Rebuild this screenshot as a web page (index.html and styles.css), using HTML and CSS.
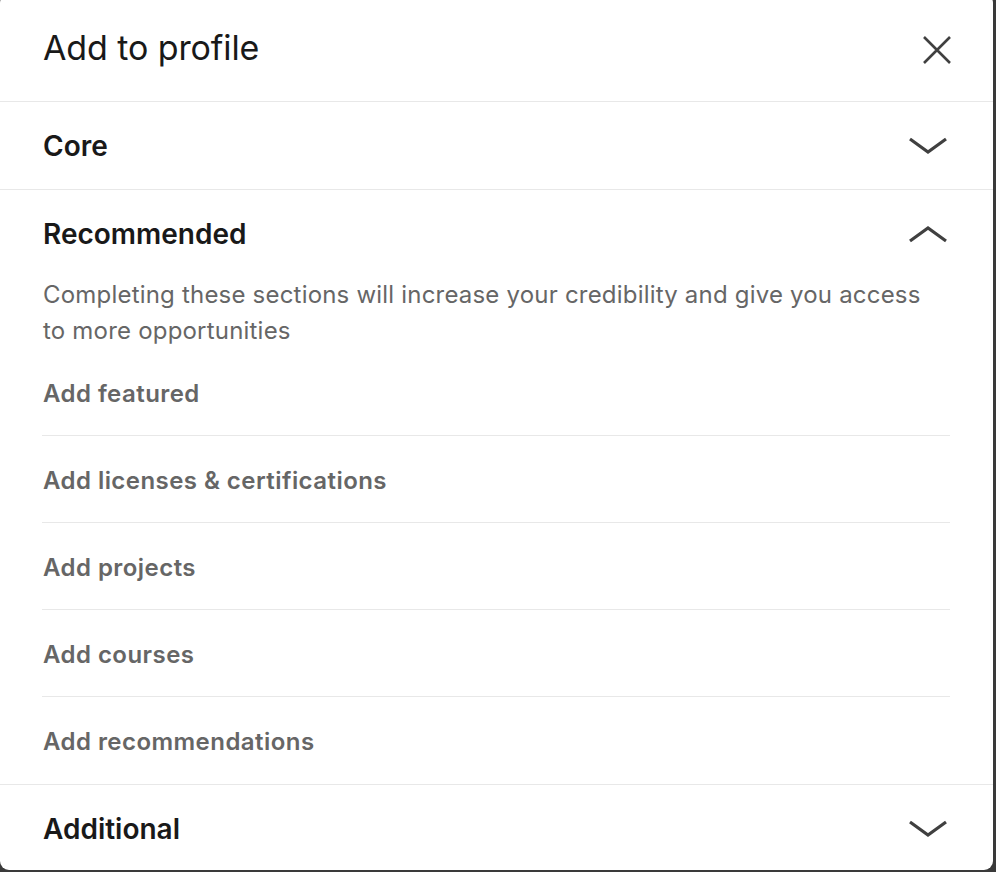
FILE: index.html
```html
<!DOCTYPE html>
<html lang="en">
<head>
<meta charset="utf-8">
<title>Add to profile</title>
<link rel="stylesheet" href="styles.css">
</head>
<body>
<div class="modal">
  <header class="modal-header">
    <h2 class="modal-title">Add to profile</h2>
    <button class="icon-btn close" aria-label="Dismiss">
      <svg width="30" height="30" viewBox="0 0 30 30"><path d="M2 2 L28 28 M28 2 L2 28" stroke="#404040" stroke-width="2.6" fill="none" stroke-linecap="butt"/></svg>
    </button>
  </header>

  <section class="section">
    <div class="section-head">
      <h3 class="section-title">Core</h3>
      <svg class="chev" width="40" height="20" viewBox="0 0 40 20"><path d="M2 3 L20 16 L38 3" stroke="#404040" stroke-width="3.2" fill="none"/></svg>
    </div>
  </section>

  <section class="section">
    <div class="section-head">
      <h3 class="section-title">Recommended</h3>
      <svg class="chev" width="40" height="20" viewBox="0 0 40 20"><path d="M2 17 L20 4 L38 17" stroke="#404040" stroke-width="3.2" fill="none"/></svg>
    </div>
    <p class="section-desc">Completing these sections will increase your credibility and give you access to more opportunities</p>
    <ul class="item-list">
      <li class="item">Add featured</li>
      <li class="item">Add licenses &amp; certifications</li>
      <li class="item">Add projects</li>
      <li class="item">Add courses</li>
      <li class="item">Add recommendations</li>
    </ul>
  </section>

  <section class="section last">
    <div class="section-head">
      <h3 class="section-title">Additional</h3>
      <svg class="chev" width="40" height="20" viewBox="0 0 40 20"><path d="M2 3 L20 16 L38 3" stroke="#404040" stroke-width="3.2" fill="none"/></svg>
    </div>
  </section>
</div>
</body>
</html>
```

FILE: styles.css
```css
html, body {
  margin: 0;
  padding: 0;
  background: #3a3a3a;
  height: 100%;
  overflow: hidden;
}

body {
  font-family: Inter, "Noto Sans", "Liberation Sans", sans-serif;
  color: #191919;
}

.modal {
  width: 993px;
  height: 876px;
  margin-top: -6px;
  background: #ffffff;
  border-radius: 9px;
  overflow: hidden;
  box-sizing: border-box;
}

.modal-header {
  height: 108px;
  box-sizing: border-box;
  display: flex;
  align-items: center;
  justify-content: space-between;
  padding: 0 41px 0 43px;
  border-bottom: 1px solid #e8e8e8;
}

.modal-title {
  margin: 0;
  font-size: 34px;
  font-weight: 400;
  color: #191919;
  letter-spacing: -0.1px;
}

.icon-btn {
  border: 0;
  background: transparent;
  padding: 0;
  width: 30px;
  height: 30px;
  display: flex;
  margin-top: 4px;
}

.section {
  border-bottom: 1px solid #e8e8e8;
}

.section.last {
  border-bottom: 0;
}

.section-head {
  height: 87px;
  display: flex;
  align-items: center;
  justify-content: space-between;
  padding: 0 45px 0 43px;
}

.section-title {
  margin: 0;
  font-size: 28px;
  font-weight: 600;
  color: #191919;
}

.chev {
  display: block;
}

.section-desc {
  margin: 0;
  padding: 0 60px 0 43px;
  font-size: 24px;
  line-height: 36px;
  letter-spacing: 0.2px;
  color: #666666;
}

.item-list {
  list-style: none;
  margin: 0 43px 0 42px;
  padding: 0;
}

.item {
  height: 84px;
  padding-top: 2px;
  display: flex;
  align-items: center;
  padding-left: 1px;
  font-size: 24px;
  font-weight: 600;
  letter-spacing: 0.45px;
  color: #666666;
  border-bottom: 1px solid #e8e8e8;
}

.item:last-child {
  height: 85px;
  border-bottom: 0;
}
```
